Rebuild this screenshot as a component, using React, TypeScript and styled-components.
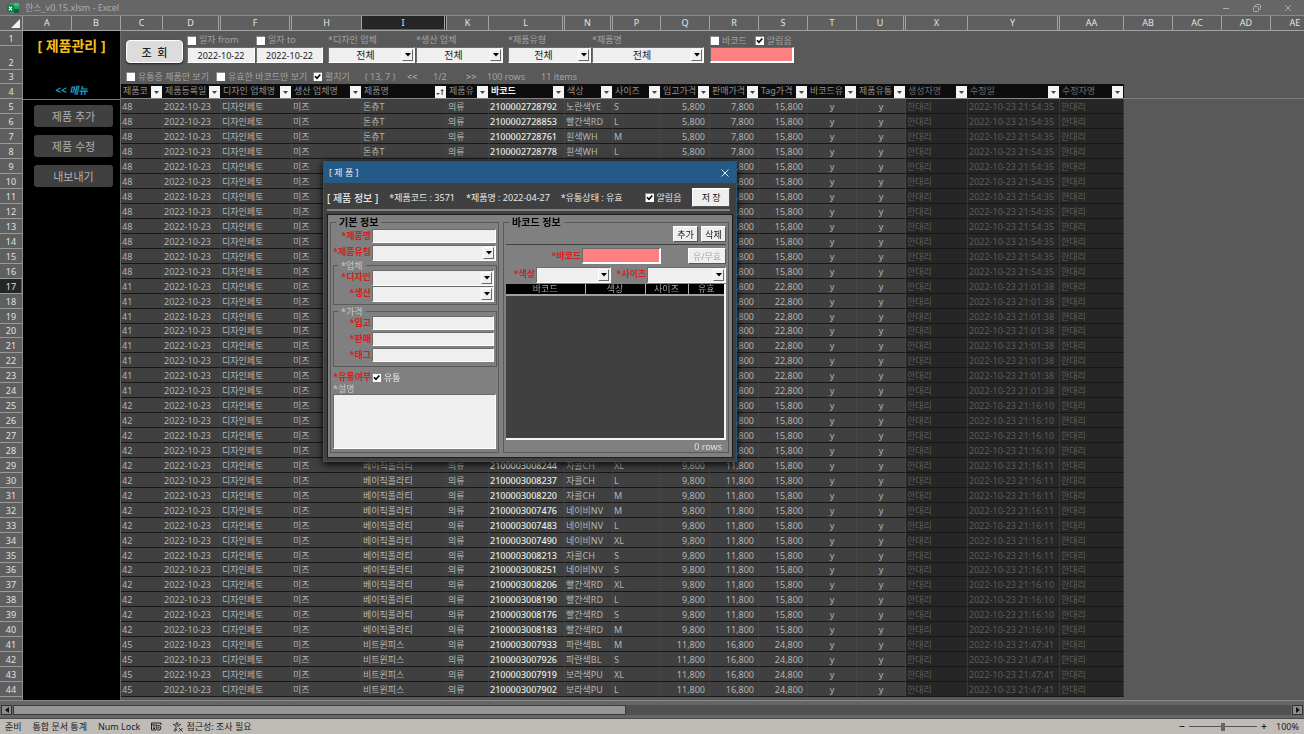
import React from "react";
import styled, { createGlobalStyle, css } from "styled-components";

const GlobalStyle = createGlobalStyle`
  *, *::before, *::after { box-sizing: border-box; }
  html, body { margin: 0; height: 100%; background: #595959; }
  body, button, input, select, textarea {
    font-family: "Noto Sans", "Noto Sans CJK KR", sans-serif;
    font-size: 9px;
  }
  #root { height: 100%; }
`;

/* ---------- data ---------- */

type Column = {
  id: string;
  width: number;
  label: string;
  align?: "left" | "center" | "right";
  hidden?: boolean;
  strong?: boolean;
  muted?: boolean;
  sorted?: boolean;
};

const COLUMNS: Column[] = [
  { id: "C", width: 42, label: "제품코" },
  { id: "D", width: 58, label: "제품등록일", hidden: true },
  { id: "F", width: 71, label: "디자인 업체명", hidden: true },
  { id: "H", width: 70, label: "생산 업체명" },
  { id: "I", width: 85, label: "제품명", hidden: true, sorted: true },
  { id: "K", width: 42, label: "제품유" },
  { id: "L", width: 76, label: "바코드", hidden: true, strong: true },
  { id: "N", width: 48, label: "색상", hidden: true },
  { id: "P", width: 48, label: "사이즈" },
  { id: "Q", width: 49, label: "입고가격", align: "right" },
  { id: "R", width: 49, label: "판매가격", align: "right" },
  { id: "S", width: 49, label: "Tag가격", align: "right" },
  { id: "T", width: 49, label: "바코드유", align: "center" },
  { id: "U", width: 49, label: "제품유통", align: "center", hidden: true },
  { id: "X", width: 62, label: "생성자명", muted: true },
  { id: "Y", width: 92, label: "수정일", muted: true, hidden: true },
  { id: "AA", width: 64, label: "수정자명", muted: true },
];

const EMPTY_COLUMNS = ["AB", "AC", "AD", "AE"];

type Batch = { code: string; name: string; prices: string[]; items: string[][] };

const BATCHES: Batch[] = [
  {
    code: "48",
    name: "돈츄T",
    prices: ["5,800", "7,800", "15,800"],
    items: [
      ["2100002728792", "노란색YE", "S", "21:54:35"],
      ["2100002728853", "빨간색RD", "L", "21:54:35"],
      ["2100002728761", "흰색WH", "M", "21:54:35"],
      ["2100002728778", "흰색WH", "L", "21:54:35"],
      ["2100002728754", "흰색WH", "S", "21:54:35"],
      ["2100002728785", "흰색WH", "XL", "21:54:35"],
      ["2100002728808", "노란색YE", "M", "21:54:35"],
      ["2100002728815", "노란색YE", "L", "21:54:35"],
      ["2100002728822", "노란색YE", "XL", "21:54:35"],
      ["2100002728839", "빨간색RD", "S", "21:54:35"],
      ["2100002728846", "빨간색RD", "M", "21:54:35"],
      ["2100002728860", "빨간색RD", "XL", "21:54:35"],
    ],
  },
  {
    code: "41",
    name: "린넨셔츠",
    prices: ["9,800", "12,800", "22,800"],
    items: ["S", "M", "L", "XL", "S", "M", "L", "XL"].map((size, i) => [
      `21000030069${10 + i * 7}`,
      i < 4 ? "흰색WH" : "네이비NV",
      size,
      "21:01:38",
    ]),
  },
  {
    code: "42",
    name: "베이직폴라티",
    prices: ["9,800", "11,800", "15,800"],
    items: [
      ["2100003007506", "네이비NV", "S", "21:16:10"],
      ["2100003007513", "흰색WH", "M", "21:16:10"],
      ["2100003007520", "흰색WH", "L", "21:16:10"],
      ["2100003007537", "흰색WH", "XL", "21:16:10"],
      ["2100003008244", "자콜CH", "XL", "21:16:11"],
      ["2100003008237", "자콜CH", "L", "21:16:11"],
      ["2100003008220", "자콜CH", "M", "21:16:11"],
      ["2100003007476", "네이비NV", "M", "21:16:11"],
      ["2100003007483", "네이비NV", "L", "21:16:11"],
      ["2100003007490", "네이비NV", "XL", "21:16:11"],
      ["2100003008213", "자콜CH", "S", "21:16:11"],
      ["2100003008251", "네이비NV", "S", "21:16:11"],
      ["2100003008206", "빨간색RD", "XL", "21:16:10"],
      ["2100003008190", "빨간색RD", "L", "21:16:10"],
      ["2100003008176", "빨간색RD", "S", "21:16:10"],
      ["2100003008183", "빨간색RD", "M", "21:16:10"],
    ],
  },
  {
    code: "45",
    name: "비트윈피스",
    prices: ["11,800", "16,800", "24,800"],
    items: [
      ["2100003007933", "파란색BL", "M", "21:47:41"],
      ["2100003007926", "파란색BL", "S", "21:47:41"],
      ["2100003007919", "보라색PU", "XL", "21:47:41"],
      ["2100003007902", "보라색PU", "L", "21:47:41"],
    ],
  },
];

const ROWS: string[][] = BATCHES.flatMap((b) =>
  b.items.map(([barcode, color, size, time]) => [
    b.code,
    "2022-10-23",
    "디자인페토",
    "미즈",
    b.name,
    "의류",
    barcode,
    color,
    size,
    ...b.prices,
    "y",
    "y",
    "한대리",
    `2022-10-23 ${time}`,
    "한대리",
  ])
);

/* ---------- window frame ---------- */

const Window = styled.div`
  display: flex;
  flex-direction: column;
  height: 100vh;
  overflow: hidden;
  background: #595959;
  color: #d0d0d0;
`;

const TitleBar = styled.header`
  display: flex;
  align-items: center;
  gap: 6px;
  flex: none;
  height: 15px;
  padding: 0 12px 0 7px;
  background: #666;
  color: #adadad;
`;

const WindowButtons = styled.div`
  display: flex;
  gap: 23px;
  margin-left: auto;
`;

const IconButton = styled.button`
  display: flex;
  padding: 0;
  border: 0;
  background: none;
  color: inherit;
`;

const ColumnBar = styled.div`
  display: flex;
  flex: none;
  height: 16px;
  border-top: 1px solid #8a8a8a;
  border-bottom: 1px solid #a3a3a3;
  background: #5f5f5f;
`;

const Corner = styled.div`
  display: flex;
  justify-content: flex-end;
  align-items: flex-end;
  flex: none;
  width: 23px;
  padding: 0 2px 2px 0;
  border-right: 1px solid #a3a3a3;
`;

const ColumnHead = styled.div<{ $width: number; $double?: boolean; $active?: boolean }>`
  flex: none;
  width: ${(p) => p.$width}px;
  border-right: ${(p) => (p.$double ? "3px double" : "1px solid")} #a3a3a3;
  color: #e4e4e4;
  line-height: 13px;
  text-align: center;
  ${(p) => p.$active && css`background: #262626; box-shadow: inset 0 -1px #2d7a58;`}
`;

const Sheet = styled.main`
  position: relative;
  display: flex;
  flex: 1;
  min-height: 0;
  overflow: hidden;
`;

const RowNumbers = styled.div`
  flex: none;
  width: 23px;
  border-right: 1px solid #8f8f8f;
  background: #5f5f5f;
`;

const RowNumber = styled.div<{ $height: number; $active?: boolean }>`
  display: flex;
  align-items: flex-end;
  justify-content: center;
  height: ${(p) => p.$height}px;
  border-bottom: 1px solid #9a9a9a;
  color: #e0e0e0;
  line-height: 13px;
  ${(p) => p.$active && css`background: #262626; box-shadow: inset -1px 0 #2d7a58;`}
`;

const Sidebar = styled.nav`
  display: flex;
  flex-direction: column;
  align-items: center;
  flex: none;
  width: 98px;
  border-right: 1px solid #6a6a6a;
  background: #000;
`;

const SidebarHead = styled.div`
  display: flex;
  flex-direction: column;
  align-items: center;
  justify-content: space-between;
  align-self: stretch;
  height: 69px;
  padding: 6px 0 1px;
  border-bottom: 1px solid #7a7a7a;
`;

const SheetTitle = styled.h1`
  margin: 0;
  color: #f5bd1c;
  font-size: 14px;
  font-weight: 700;
  line-height: 18px;
`;

const MenuLink = styled.a`
  color: #1c9ad0;
  font-size: 10px;
  font-style: italic;
  font-weight: 700;
  line-height: 15px;
  text-decoration: none;
`;

const MenuButtons = styled.div`
  display: flex;
  flex-direction: column;
  gap: 8px;
  padding: 5px 0 0 4px;
`;

const MenuButton = styled.button`
  width: 79px;
  height: 22px;
  padding: 0;
  border: 0;
  border-radius: 3px;
  background: #404040;
  color: #b0b0b0;
  font-size: 11px;
`;

const Main = styled.div`
  flex: 1;
  min-width: 0;
`;

/* ---------- shared controls ---------- */

const CheckBox = styled.input.attrs({ type: "checkbox" })`
  appearance: none;
  flex: none;
  width: 9px;
  height: 9px;
  margin: 0;
  background: #fff;
  box-shadow: inset 1px 1px #8a8a8a;
  &:checked {
    background: #fff
      url("data:image/svg+xml,%3Csvg xmlns='http://www.w3.org/2000/svg' viewBox='0 0 9 9'%3E%3Cpath d='M2 4.2L4 6.3L7.3 2.4' fill='none' stroke='%23000' stroke-width='1.6'/%3E%3C/svg%3E");
  }
`;

const CheckLabel = styled.label`
  display: flex;
  align-items: center;
  gap: 3px;
  white-space: nowrap;
`;

const boxed = css`
  border: 1px solid;
  border-color: #6b6b6b #fff #fff #6b6b6b;
  border-radius: 0;
  background: #efefef;
  color: #222;
`;

const TextInput = styled.input<{ $alert?: boolean }>`
  ${boxed}
  width: 100%;
  min-width: 0;
  height: 14px;
  padding: 0 2px;
  outline: 0;
  ${(p) => p.$alert && css`height: 16px; border-width: 1px 2px 2px 1px; background: #ff8080;`}
`;

const SelectWrap = styled.div<{ $height: number }>`
  display: grid;
  align-items: center;
  height: ${(p) => p.$height}px;
  min-width: 0;
  & > * { grid-area: 1 / 1; }
`;

const SelectBox = styled.select`
  ${boxed}
  appearance: none;
  width: 100%;
  height: 100%;
  padding: 0 12px 0 0;
  font-size: 10px;
  text-align: center;
  text-align-last: center;
`;

const Arrow = styled.span`
  display: flex;
  align-items: center;
  justify-content: center;
  justify-self: end;
  width: 11px;
  height: calc(100% - 4px);
  margin-right: 2px;
  border: 1px solid;
  border-color: #fff #6b6b6b #6b6b6b #fff;
  background: #efefef;
  pointer-events: none;
`;

function Select({ id, label, value = "", height = 14 }: { id: string; label?: string; value?: string; height?: number }) {
  return (
    <SelectWrap $height={height}>
      <SelectBox id={id} aria-label={label}>
        <option>{value}</option>
      </SelectBox>
      <Arrow>
        <svg width="6" height="4" viewBox="0 0 6 4">
          <path d="M0 0h6L3 3.6z" fill="#000" />
        </svg>
      </Arrow>
    </SelectWrap>
  );
}

/* ---------- filter bar ---------- */

const Filters = styled.form`
  height: 53px;
  color: #a2a2a2;
`;

const FilterRow = styled.div`
  display: flex;
  height: 38px;
  padding: 3px 0 0 5px;
`;

const QueryButton = styled.button`
  flex: none;
  width: 57px;
  height: 23px;
  margin: 6px 4px 0 0;
  padding: 0;
  border: 1px solid #fff;
  border-radius: 4px;
  background: #dcdcdc;
  box-shadow: 0 1px 2px #222;
  color: #222;
  font-size: 11px;
  font-weight: 500;
  white-space: pre;
`;

const Field = styled.div<{ $width: number; $gap?: number }>`
  display: flex;
  flex-direction: column;
  gap: 1px;
  flex: none;
  width: ${(p) => p.$width}px;
  margin-right: ${(p) => p.$gap ?? 1}px;
  & > label { height: 12px; line-height: 12px; font-size: 9px; }
`;

const DateInput = styled.input`
  ${boxed}
  width: 100%;
  height: 16px;
  padding: 0;
  text-align: center;
`;

const Pair = styled.div`
  display: flex;
  gap: 8px;
  height: 12px;
`;

const OptionRow = styled.div`
  display: flex;
  align-items: center;
  height: 15px;
  padding-left: 5px;
  white-space: pre;
`;

const Slot = styled.span<{ $width: number }>`
  flex: none;
  width: ${(p) => p.$width}px;
`;

const PageButton = styled.button<{ $width: number }>`
  width: ${(p) => p.$width}px;
  padding: 0;
  border: 0;
  background: none;
  color: #bdbdbd;
  text-align: left;
`;

/* ---------- table ---------- */

const Grid = styled.table`
  table-layout: fixed;
  width: 100%;
  min-width: 1003px;
  border-collapse: separate;
  border-spacing: 0;
`;

const HeadCell = styled.th<{ $strong?: boolean; $muted?: boolean }>`
  height: 15px;
  padding: 0;
  border-bottom: 1px solid #858585;
  background: #0d0d0d;
  color: ${(p) => (p.$strong ? "#f0f0f0" : p.$muted ? "#6e6e6e" : "#8f8f8f")};
  font-weight: ${(p) => (p.$strong ? 700 : 400)};
  text-align: left;
`;

const EmptyHead = styled.td`
  padding: 0;
  border-bottom: 1px solid #7e7e7e;
`;

const HeadInner = styled.div`
  display: flex;
  align-items: flex-end;
  height: 14px;
  padding-left: 2px;
`;

const HeadText = styled.span`
  flex: 1;
  min-width: 0;
  line-height: 14px;
  white-space: nowrap;
`;

const FilterButton = styled.button`
  display: flex;
  align-items: center;
  justify-content: center;
  flex: none;
  width: 11px;
  height: 12px;
  margin-right: 1px;
  padding: 0;
  border: 0;
  background: #f4f4f4;
`;

const BodyRow = styled.tr`
  height: 15px;
  &:nth-child(16n) { height: 14px; }
`;

const Cell = styled.td<{ $align?: string; $strong?: boolean; $muted?: boolean }>`
  overflow: hidden;
  height: inherit;
  padding: 0 ${(p) => (p.$align === "right" ? 4 : 1)}px 0 1px;
  border-right: 1px solid ${(p) => (p.$muted ? "#383838" : "#464646")};
  border-bottom: 1px solid #171717;
  background: ${(p) => (p.$muted ? "#262626" : "#404040")};
  color: ${(p) => (p.$strong ? "#e6ece4" : p.$muted ? "#5c5c5c" : "#b4b4b4")};
  font-weight: ${(p) => (p.$strong ? 500 : 400)};
  line-height: 13px;
  text-align: ${(p) => p.$align ?? "left"};
  white-space: nowrap;
`;

/* ---------- dialog ---------- */

const Dialog = styled.section`
  position: absolute;
  top: 130px;
  left: 323px;
  display: flex;
  flex-direction: column;
  width: 414px;
  padding-bottom: 3px;
  border: 1px solid #2a5573;
  background: #404040;
  box-shadow: 0 2px 8px #000;
  color: #e8e8e8;
`;

const DialogTitle = styled.header`
  display: flex;
  align-items: center;
  justify-content: space-between;
  flex: none;
  height: 21px;
  padding: 0 7px 0 5px;
  background: #235a87;
`;

const DialogInfo = styled.div`
  display: flex;
  align-items: center;
  gap: 11px;
  flex: none;
  height: 28px;
  margin: 0 6px 0 3px;
  padding-top: 2px;
  border-bottom: 2px solid #808080;
  white-space: pre;
`;

const InfoTitle = styled.strong`
  font-size: 10px;
  font-weight: 500;
`;

const FlatButton = styled.button<{ $width: number; $height: number }>`
  width: ${(p) => p.$width}px;
  height: ${(p) => p.$height}px;
  padding: 0;
  border: 1px solid;
  border-color: #fff #555 #555 #fff;
  background: #efefef;
  color: #111;
  white-space: pre;
  &:disabled { color: #a8a8a8; }
`;

const Spacer = styled.span`
  flex: 1;
`;

const DialogPanel = styled.div`
  display: flex;
  gap: 4px;
  flex: none;
  height: 244px;
  margin: 3px 3px 0;
  padding: 1px 3px 4px 2px;
  border: 1px solid #1c1c1c;
  background: #808080;
`;

const Group = styled.fieldset<{ $width?: number }>`
  flex: ${(p) => (p.$width ? "none" : 1)};
  width: ${(p) => (p.$width ? `${p.$width}px` : "auto")};
  min-width: 0;
  margin: 0;
  padding: 0 2px;
  border: 1px solid #5a5a5a;
  & > legend {
    margin-left: 3px;
    padding: 0 3px;
    color: #000;
    font-size: 10px;
    font-weight: 700;
    line-height: 13px;
  }
`;

const SubGroup = styled.fieldset<{ $bottom: number }>`
  display: flex;
  flex-direction: column;
  gap: 2px;
  min-width: 0;
  margin: 2px -1px 0 0;
  padding: 0 2px ${(p) => p.$bottom}px 0;
  border: 1px solid #5a5a5a;
  & > legend {
    margin-left: 4px;
    padding: 0 3px;
    color: #c8c8c8;
    line-height: 9px;
  }
`;

const FormRow = styled.div<{ $label: number }>`
  display: grid;
  grid-template-columns: ${(p) => p.$label}px 1fr;
  align-items: center;
  column-gap: 1px;
  & > label:first-child, & > span:first-child {
    justify-self: end;
    color: #d42020;
    font-weight: 700;
    line-height: 14px;
    white-space: nowrap;
  }
`;

const Stack = styled.div<{ $gap: number }>`
  display: flex;
  flex-direction: column;
  gap: ${(p) => p.$gap}px;
`;

const StatusField = styled.div`
  padding-top: 3px;
`;

const NoteLabel = styled.label`
  display: block;
  color: #c8c8c8;
  line-height: 10px;
`;

const Note = styled.textarea`
  ${boxed}
  display: block;
  width: 163px;
  height: 55px;
  resize: none;
`;

const ButtonRow = styled.div`
  display: flex;
  justify-content: flex-end;
  gap: 3px;
  height: 19px;
  margin-top: -3px;
  border-bottom: 1px solid #404040;
`;

const BarcodeRow = styled.div`
  display: grid;
  grid-template-columns: 114px 38px;
  justify-content: space-between;
  padding: 3px 0 0 41px;
`;

const TwoFields = styled.div`
  display: grid;
  grid-template-columns: 105px 1fr;
  column-gap: 6px;
  padding: 3px 0;
`;

const BarcodeBox = styled.div`
  height: 156px;
  border: solid #f4f4f4;
  border-width: 0 2px 2px 0;
  background: #404040;
`;

const BarcodeTable = styled.table`
  table-layout: fixed;
  width: 100%;
  border-collapse: collapse;
  border-bottom: 2px solid #a0a0a0;
  & th {
    height: 10px;
    padding: 0;
    border-right: 1px solid #b0b0b0;
    background: #000;
    color: #a0a0a0;
    font-weight: 400;
    line-height: 10px;
  }
  & th:last-child { border-right: 0; }
`;

const RowCount = styled.p`
  margin: 1px 4px 0 0;
  color: #e0e0e0;
  line-height: 12px;
  text-align: right;
`;

/* ---------- footer ---------- */

const ScrollArea = styled.div`
  display: flex;
  align-items: center;
  flex: none;
  height: 19px;
  border-top: 1px solid #8a8a8a;
  border-bottom: 1px solid #4a4a4a;
  background: #666;
`;

const ScrollButton = styled.button`
  display: flex;
  align-items: center;
  justify-content: center;
  width: 11px;
  height: 10px;
  margin: 0 1px;
  padding: 0;
  border: 1px solid #333;
  background: #8c8c8c;
`;

const ScrollTrack = styled.div`
  flex: 1;
  height: 10px;
  background: #505050;
`;

const ScrollThumb = styled.div`
  width: 48%;
  height: 10px;
  border: 1px solid #3a3a3a;
  background: #969696;
`;

const StatusBar = styled.footer`
  display: flex;
  align-items: center;
  gap: 11px;
  flex: none;
  height: 15px;
  padding: 0 5px;
  background: #bfbbb7;
  color: #222;
`;

const StatusItem = styled.span`
  display: flex;
  align-items: center;
  gap: 3px;
`;

const ZoomGroup = styled.div`
  display: flex;
  align-items: center;
  gap: 4px;
  margin-left: auto;
`;

const ZoomSlider = styled.input.attrs({ type: "range" })`
  appearance: none;
  width: 68px;
  height: 9px;
  margin: 0;
  background: linear-gradient(#555, #555) center / 100% 1px no-repeat;
  &::-webkit-slider-thumb {
    appearance: none;
    width: 4px;
    height: 8px;
    background: #666;
  }
`;

const ZoomValue = styled.span`
  padding-left: 5px;
`;

const FROZEN_ROWS = [15, 24, 14, 15];

export default function App() {
  return (
    <>
      <GlobalStyle />
      <Window>
        <TitleBar>
          <svg width="12" height="12" viewBox="0 0 12 12">
            <rect x="3" y="1" width="9" height="10" rx="1" fill="#21a366" />
            <path d="M7 1h4a1 1 0 0 1 1 1v2H7z" fill="#33c481" />
            <path d="M7 7h5v3a1 1 0 0 1-1 1H7z" fill="#185c37" />
            <rect x="0" y="3" width="7" height="7" rx="1" fill="#107c41" />
            <path d="M2 4.7l3 3.6M5 4.7l-3 3.6" stroke="#fff" strokeWidth="1.1" />
          </svg>
          <span>한스_v0.15.xlsm - Excel</span>
          <WindowButtons>
            <IconButton aria-label="최소화">
              <svg width="8" height="8" viewBox="0 0 8 8"><path d="M1 4.5h6" stroke="currentColor" /></svg>
            </IconButton>
            <IconButton aria-label="이전 크기로">
              <svg width="8" height="8" viewBox="0 0 8 8" fill="none" stroke="currentColor">
                <rect x="0.5" y="2.5" width="5" height="5" rx="1" />
                <path d="M2.5 2V1.5a1 1 0 0 1 1-1h3a1 1 0 0 1 1 1v3a1 1 0 0 1-1 1H6" />
              </svg>
            </IconButton>
            <IconButton aria-label="닫기">
              <svg width="8" height="8" viewBox="0 0 8 8"><path d="M1 1l6 6M7 1l-6 6" stroke="currentColor" /></svg>
            </IconButton>
          </WindowButtons>
        </TitleBar>

        <ColumnBar>
          <Corner>
            <svg width="9" height="9" viewBox="0 0 9 9"><path d="M9 0v9H0z" fill="#f0f0f0" /></svg>
          </Corner>
          <ColumnHead $width={49}>A</ColumnHead>
          <ColumnHead $width={49}>B</ColumnHead>
          {COLUMNS.map((c) => (
            <ColumnHead key={c.id} $width={c.width} $double={c.hidden} $active={c.id === "I"}>
              {c.id}
            </ColumnHead>
          ))}
          {EMPTY_COLUMNS.map((id) => (
            <ColumnHead key={id} $width={49}>{id}</ColumnHead>
          ))}
        </ColumnBar>

        <Sheet>
          <RowNumbers>
            {FROZEN_ROWS.map((h, i) => (
              <RowNumber key={i} $height={h}>{i + 1}</RowNumber>
            ))}
            {ROWS.map((_, i) => (
              <RowNumber key={i} $height={(i + 1) % 16 ? 15 : 14} $active={i === 12}>{i + 5}</RowNumber>
            ))}
          </RowNumbers>

          <Sidebar>
            <SidebarHead>
              <SheetTitle>[ 제품관리 ]</SheetTitle>
              <MenuLink href="#menu">&lt;&lt; 메뉴</MenuLink>
            </SidebarHead>
            <MenuButtons>
              <MenuButton>제품 추가</MenuButton>
              <MenuButton>제품 수정</MenuButton>
              <MenuButton>내보내기</MenuButton>
            </MenuButtons>
          </Sidebar>

          <Main>
            <Filters>
              <FilterRow>
                <QueryButton type="button">조  회</QueryButton>
                <Field $width={68}>
                  <CheckLabel><CheckBox />일자 from</CheckLabel>
                  <DateInput aria-label="일자 from" defaultValue="2022-10-22" />
                </Field>
                <Field $width={67} $gap={5}>
                  <CheckLabel><CheckBox />일자 to</CheckLabel>
                  <DateInput aria-label="일자 to" defaultValue="2022-10-22" />
                </Field>
                <Field $width={87}>
                  <label htmlFor="designer">*디자인 업체</label>
                  <Select id="designer" value="전체" height={16} />
                </Field>
                <Field $width={87} $gap={5}>
                  <label htmlFor="maker">*생산 업체</label>
                  <Select id="maker" value="전체" height={16} />
                </Field>
                <Field $width={83}>
                  <label htmlFor="kind">*제품유형</label>
                  <Select id="kind" value="전체" height={16} />
                </Field>
                <Field $width={112} $gap={6}>
                  <label htmlFor="product">*제품명</label>
                  <Select id="product" value="전체" height={16} />
                </Field>
                <Field $width={84}>
                  <Pair>
                    <CheckLabel><CheckBox />바코드</CheckLabel>
                    <CheckLabel><CheckBox defaultChecked />알림음</CheckLabel>
                  </Pair>
                  <TextInput $alert aria-label="바코드" />
                </Field>
              </FilterRow>
              <OptionRow>
                <Slot $width={90}><CheckLabel><CheckBox />유통중 제품만 보기</CheckLabel></Slot>
                <Slot $width={97}><CheckLabel><CheckBox />유효한 바코드만 보기</CheckLabel></Slot>
                <Slot $width={52}><CheckLabel><CheckBox defaultChecked />펼치기</CheckLabel></Slot>
                <Slot $width={42}>( 13, 7 )</Slot>
                <PageButton type="button" $width={26}>&lt;&lt;</PageButton>
                <Slot $width={33}>1/2</Slot>
                <PageButton type="button" $width={21}>&gt;&gt;</PageButton>
                <Slot $width={54}>100 rows</Slot>
                <span>11 items</span>
              </OptionRow>
            </Filters>

            <Grid>
              <colgroup>
                {COLUMNS.map((c) => <col key={c.id} width={c.width} />)}
                <col />
              </colgroup>
              <thead>
                <tr>
                  {COLUMNS.map((c) => (
                    <HeadCell key={c.id} $strong={c.strong} $muted={c.muted}>
                      <HeadInner>
                        <HeadText>{c.label}</HeadText>
                        <FilterButton aria-label={`${c.label} 필터`}>
                          <svg width="9" height="8" viewBox="0 0 9 8" fill="#444">
                            {c.sorted ? (
                              <path d="M0 5h4L2 7zM6 1l2 2H6.6v4h-1V3H4.5z" />
                            ) : (
                              <path d="M2 3h5L4.500 6z" />
                            )}
                          </svg>
                        </FilterButton>
                      </HeadInner>
                    </HeadCell>
                  ))}
                  <EmptyHead />
                </tr>
              </thead>
              <tbody>
                {ROWS.map((row, r) => (
                  <BodyRow key={r}>
                    {row.map((value, i) => (
                      <Cell key={i} $align={COLUMNS[i].align} $strong={COLUMNS[i].strong} $muted={COLUMNS[i].muted}>
                        {value}
                      </Cell>
                    ))}
                  </BodyRow>
                ))}
              </tbody>
            </Grid>
          </Main>

          <Dialog role="dialog" aria-label="제품">
            <DialogTitle>
              <span>[ 제 품 ]</span>
              <IconButton aria-label="닫기">
                <svg width="8" height="8" viewBox="0 0 8 8"><path d="M0.500 0.500l7 7M7.500 0.500l-7 7" stroke="currentColor" /></svg>
              </IconButton>
            </DialogTitle>
            <DialogInfo>
              <InfoTitle>[ 제품 정보 ]</InfoTitle>
              <span>*제품코드 : 3571</span>
              <span>*제품명 : 2022-04-27</span>
              <span>*유통상태 : 유효</span>
              <Spacer />
              <CheckLabel><CheckBox defaultChecked />알림음</CheckLabel>
              <FlatButton $width={41} $height={19}>저 장</FlatButton>
            </DialogInfo>
            <DialogPanel>
              <Group $width={169}>
                <legend>기본 정보</legend>
                <Stack $gap={2}>
                  <FormRow $label={38}>
                    <label htmlFor="f-name">*제품명</label>
                    <TextInput id="f-name" autoFocus />
                  </FormRow>
                  <FormRow $label={38}>
                    <label htmlFor="f-kind">*제품유형</label>
                    <Select id="f-kind" />
                  </FormRow>
                </Stack>
                <SubGroup $bottom={4}>
                  <legend>*업체</legend>
                  <FormRow $label={37}>
                    <label htmlFor="f-design">*디자인</label>
                    <Select id="f-design" />
                  </FormRow>
                  <FormRow $label={37}>
                    <label htmlFor="f-make">*생산</label>
                    <Select id="f-make" />
                  </FormRow>
                </SubGroup>
                <SubGroup $bottom={4}>
                  <legend>*가격</legend>
                  {["입고", "판매", "태그"].map((name) => (
                    <FormRow key={name} $label={37}>
                      <label htmlFor={`f-${name}`}>*{name}</label>
                      <TextInput id={`f-${name}`} />
                    </FormRow>
                  ))}
                </SubGroup>
                <StatusField>
                  <FormRow $label={38}>
                    <span>*유통여부</span>
                    <CheckLabel><CheckBox defaultChecked />유통</CheckLabel>
                  </FormRow>
                </StatusField>
                <NoteLabel htmlFor="f-note">*설명</NoteLabel>
                <Note id="f-note" />
              </Group>
              <Group>
                <legend>바코드 정보</legend>
                <ButtonRow>
                  <FlatButton $width={25} $height={16}>추가</FlatButton>
                  <FlatButton $width={25} $height={16}>삭제</FlatButton>
                </ButtonRow>
                <BarcodeRow>
                  <FormRow $label={34}>
                    <label htmlFor="f-barcode">*바코드</label>
                    <TextInput id="f-barcode" $alert />
                  </FormRow>
                  <FlatButton $width={38} $height={16} disabled>유/무효</FlatButton>
                </BarcodeRow>
                <TwoFields>
                  <FormRow $label={29}>
                    <label htmlFor="f-color">*색상</label>
                    <Select id="f-color" />
                  </FormRow>
                  <FormRow $label={29}>
                    <label htmlFor="f-size">*사이즈</label>
                    <Select id="f-size" />
                  </FormRow>
                </TwoFields>
                <BarcodeBox>
                  <BarcodeTable>
                    <colgroup>
                      <col width="79" /><col width="60" /><col width="43" /><col />
                    </colgroup>
                    <thead>
                      <tr><th>바코드</th><th>색상</th><th>사이즈</th><th>유효</th></tr>
                    </thead>
                  </BarcodeTable>
                </BarcodeBox>
                <RowCount>0 rows</RowCount>
              </Group>
            </DialogPanel>
          </Dialog>
        </Sheet>

        <ScrollArea>
          <ScrollButton aria-label="왼쪽으로">
            <svg width="4" height="6" viewBox="0 0 4 6"><path d="M4 0v6L0 3z" fill="#111" /></svg>
          </ScrollButton>
          <ScrollTrack><ScrollThumb /></ScrollTrack>
          <ScrollButton aria-label="오른쪽으로">
            <svg width="4" height="6" viewBox="0 0 4 6"><path d="M0 0v6l4-3z" fill="#111" /></svg>
          </ScrollButton>
        </ScrollArea>

        <StatusBar>
          <StatusItem>준비</StatusItem>
          <StatusItem>통합 문서 통계</StatusItem>
          <StatusItem>Num Lock</StatusItem>
          <StatusItem>
            <svg width="11" height="9" viewBox="0 0 11 9" fill="none" stroke="#222">
              <path d="M10 3V1H0.500v7H5M0.500 3H6M2 5h2M2 6.500h2" />
              <circle cx="7.500" cy="5.800" r="2.400" />
              <circle cx="7.500" cy="5.800" r="0.600" />
            </svg>
          </StatusItem>
          <StatusItem>
            <svg width="10" height="10" viewBox="0 0 10 10" fill="none" stroke="#222" strokeWidth="0.900">
              <circle cx="4" cy="1.500" r="1" />
              <path d="M0.500 2.200L3 3.600V5.500L1.200 8.600L2.400 9.200L4 6.600M7.500 2.200L5 3.600V5M0.500 2.200L1 3.300M7.500 2.200L7 3.300" />
              <path d="M6 6l3.500 3.500M9.500 6L6 9.500" />
            </svg>
            접근성: 조사 필요
          </StatusItem>
          <ZoomGroup>
            <IconButton aria-label="축소">
              <svg width="6" height="7" viewBox="0 0 6 7"><path d="M0.500 3.500h5" stroke="#222" /></svg>
            </IconButton>
            <ZoomSlider aria-label="확대/축소" defaultValue={50} />
            <IconButton aria-label="확대">
              <svg width="6" height="7" viewBox="0 0 6 7"><path d="M0.500 3.500h5M3 1v5" stroke="#222" /></svg>
            </IconButton>
            <ZoomValue>100%</ZoomValue>
          </ZoomGroup>
        </StatusBar>
      </Window>
    </>
  );
}
